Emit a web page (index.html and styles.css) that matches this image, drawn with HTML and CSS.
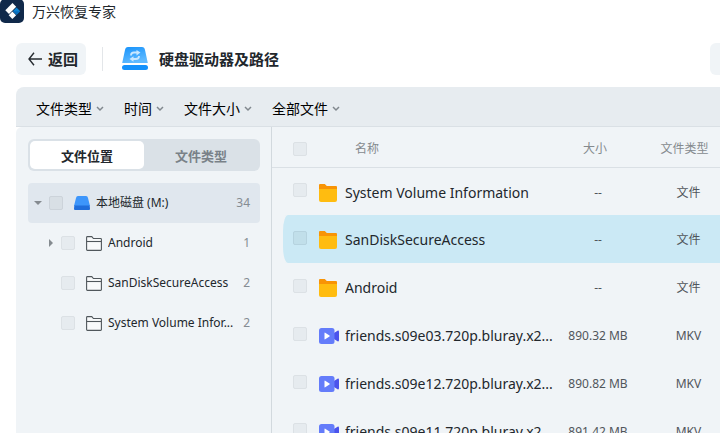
FILE: index.html
```html
<!DOCTYPE html>
<html lang="zh-CN">
<head>
<meta charset="utf-8">
<title>万兴恢复专家</title>
<link rel="stylesheet" href="styles.css">
</head>
<body>
<svg class="sprite" aria-hidden="true">
  <symbol id="chevron" viewBox="0 0 8 6"><path d="M1 1l3 3 3-3" fill="none" stroke="#81888e" stroke-width="1.5"/></symbol>
  <symbol id="folder-line" viewBox="0 0 16 15"><path d="M.6 13.500V1.400q0-.8.8-.8h4.400l1.600 1.900h7.200q.8 0 .8.8v10.200q0 .9-.8.9H1.400q-.8 0-.8-.9z" fill="#f8fafb" stroke="#50575c" stroke-width="1.1"/><path d="M.6 5.500h14.800" stroke="#50575c" stroke-width="1.1"/></symbol>
  <symbol id="folder" viewBox="0 0 18 18"><path d="M0 1q0-1 1-1h4.800l2 2H17q1 0 1 1v4H0z" fill="#f89406"/><path d="M0 5h18v11q0 2-2 2H2q-2 0-2-2z" fill="#ffbc10"/></symbol>
  <symbol id="video" viewBox="0 0 20 16"><path d="M15 5l3.500-2.300q1.500-.5 1.500 1v8.600q0 1.500-1.500 1L15 11z" fill="#4b53ec"/><rect width="15.500" height="16" rx="2.500" fill="#647cfa"/><path d="M5.500 5v6q0 .7.700.3l4.300-2.800q.5-.5 0-1L6.200 4.700q-.7-.4-.7.3z" fill="#fff"/></symbol>
</svg>
<div class="app">
  <header class="titlebar">
    <svg class="logo" viewBox="0 0 24 24" aria-hidden="true"><rect y="-1" width="24" height="24" rx="5" fill="#10294a"/><path d="M12.500 3l3.700 3.700-7.200 7.200L5.300 10.200z" fill="#fff"/><path d="M12.400 11.600l3.700 3.700-3.700 3.700-3.700-3.700z" fill="#fff"/><path d="M16.500 7.500l3.700 3.700-3.700 3.600-3.600-3.600z" fill="#0c86d6"/><path d="M12.900 11.200h7.300l-3.700 3.600z" fill="#0a6dbb"/></svg>
    <h1 class="app-name">万兴恢复专家</h1>
  </header>
  <nav class="navbar">
    <button class="back" type="button"><svg class="arrow" viewBox="0 0 14 14" aria-hidden="true"><path d="M6 .8L1 7l5 6.200M1 7h13" fill="none" stroke="#262b30" stroke-width="1.400"/></svg>返回</button>
    <span class="separator"></span>
    <svg class="drive" viewBox="0 0 26 24" aria-hidden="true"><defs><linearGradient id="blue" x2=".4" y2="1"><stop stop-color="#1692fb"/><stop offset="1" stop-color="#60baff"/></linearGradient></defs><path d="M3 3q.5-3 3-3h14q2.500 0 3 3l2.800 13H.2z" fill="url(#blue)"/><rect y="18" width="26" height="5" rx="2.500" fill="#1491fb"/><path d="M9 8.500q0-3 3-3h3M17 9q0 3-3 3h-3" fill="none" stroke="#c8e7ff" stroke-width="1.800"/><path d="M14.500 3L18.500 5.500l-4 3zM11.500 9.200L7.500 12l4 2.800z" fill="#c8e7ff"/></svg>
    <h2 class="page-title">硬盘驱动器及路径</h2>
    <button class="more" type="button" aria-label="更多"></button>
  </nav>
  <section class="filters">
    <button class="filter" type="button">文件类型<svg class="chevron" aria-hidden="true"><use href="#chevron"/></svg></button>
    <button class="filter" type="button">时间<svg class="chevron" aria-hidden="true"><use href="#chevron"/></svg></button>
    <button class="filter" type="button">文件大小<svg class="chevron" aria-hidden="true"><use href="#chevron"/></svg></button>
    <button class="filter" type="button">全部文件<svg class="chevron" aria-hidden="true"><use href="#chevron"/></svg></button>
  </section>
  <main class="content">
    <aside class="sidebar">
      <div class="tabs">
        <button class="tab active" type="button">文件位置</button>
        <button class="tab" type="button">文件类型</button>
      </div>
      <ul class="tree">
        <li class="node root">
          <span class="caret open"></span><input class="check" type="checkbox" id="disk">
          <svg class="disk" viewBox="0 0 16 14" aria-hidden="true"><path d="M2 2q.3-2 2-2h8q1.700 0 2 2l2 8H0z" fill="#3d96fb"/><path d="M.3 9.500h15.400L16 13q0 1-1 1H1q-1 0-1-1z" fill="#206edb"/></svg>
          <label class="node-name" for="disk">本地磁盘 (M:)</label><span class="count">34</span>
        </li>
        <li class="node">
          <span class="caret"></span><input class="check" type="checkbox" id="t1">
          <svg class="outline" aria-hidden="true"><use href="#folder-line"/></svg>
          <label class="node-name" for="t1">Android</label><span class="count">1</span>
        </li>
        <li class="node">
          <span class="caret none"></span><input class="check" type="checkbox" id="t2">
          <svg class="outline" aria-hidden="true"><use href="#folder-line"/></svg>
          <label class="node-name" for="t2">SanDiskSecureAccess</label><span class="count">2</span>
        </li>
        <li class="node">
          <span class="caret none"></span><input class="check" type="checkbox" id="t3">
          <svg class="outline" aria-hidden="true"><use href="#folder-line"/></svg>
          <label class="node-name" for="t3">System Volume Infor...</label><span class="count">2</span>
        </li>
      </ul>
    </aside>
    <section class="files">
      <table class="table">
        <thead>
          <tr><th class="pick"><input class="check" type="checkbox" aria-label="全选"></th><th class="name">名称</th><th class="size">大小</th><th class="type">文件类型</th></tr>
        </thead>
        <tbody>
          <tr><td class="pick"><input class="check" type="checkbox" id="f1"></td><td class="name"><div class="entry"><svg class="file-icon" aria-hidden="true"><use href="#folder"/></svg><label class="file-name" for="f1">System Volume Information</label></div></td><td class="size">--</td><td class="type">文件</td></tr>
          <tr class="selected"><td class="pick"><input class="check" type="checkbox" id="f2"></td><td class="name"><div class="entry"><svg class="file-icon" aria-hidden="true"><use href="#folder"/></svg><label class="file-name" for="f2">SanDiskSecureAccess</label></div></td><td class="size">--</td><td class="type">文件</td></tr>
          <tr><td class="pick"><input class="check" type="checkbox" id="f3"></td><td class="name"><div class="entry"><svg class="file-icon" aria-hidden="true"><use href="#folder"/></svg><label class="file-name" for="f3">Android</label></div></td><td class="size">--</td><td class="type">文件</td></tr>
          <tr><td class="pick"><input class="check" type="checkbox" id="f4"></td><td class="name"><div class="entry"><svg class="file-icon video" aria-hidden="true"><use href="#video"/></svg><label class="file-name" for="f4">friends.s09e03.720p.bluray.x2...</label></div></td><td class="size">890.32 MB</td><td class="type">MKV</td></tr>
          <tr><td class="pick"><input class="check" type="checkbox" id="f5"></td><td class="name"><div class="entry"><svg class="file-icon video" aria-hidden="true"><use href="#video"/></svg><label class="file-name" for="f5">friends.s09e12.720p.bluray.x2...</label></div></td><td class="size">890.82 MB</td><td class="type">MKV</td></tr>
          <tr><td class="pick"><input class="check" type="checkbox" id="f6"></td><td class="name"><div class="entry"><svg class="file-icon video" aria-hidden="true"><use href="#video"/></svg><label class="file-name" for="f6">friends.s09e11.720p.bluray.x2...</label></div></td><td class="size">891.42 MB</td><td class="type">MKV</td></tr>
        </tbody>
      </table>
    </section>
  </main>
</div>
</body>
</html>
```
FILE: styles.css
```css
* { box-sizing: border-box; }
body {
  margin: 0;
  background: #fff;
  color: #22272c;
  font: 12px/20px "Noto Sans", "Noto Sans CJK SC", sans-serif;
}
button {
  border: 0;
  padding: 0;
  background: none;
  color: inherit;
  font: inherit;
}
h1, h2, ul { margin: 0; padding: 0; }
svg { display: block; flex: none; }
.sprite { position: absolute; width: 0; height: 0; }
.app { display: flex; flex-direction: column; height: 100vh; overflow: hidden; }

.titlebar { display: flex; gap: 8px; height: 43px; flex: none; }
.logo { width: 24px; height: 24px; }
.app-name { font-size: 14px; line-height: 24px; font-weight: 400; }

.navbar { display: flex; align-items: center; height: 44px; padding: 0 0 12px 16px; flex: none; }
.back {
  display: flex;
  align-items: center;
  gap: 6px;
  height: 32px;
  padding: 0 8px 0 12px;
  border-radius: 6px;
  background: #f0f4f7;
  font-size: 15px;
  font-weight: 700;
}
.arrow { width: 14px; height: 14px; }
.separator { width: 1px; height: 24px; margin: 0 19px 0 16px; background: #e3e6e9; }
.drive { width: 26px; height: 24px; }
.page-title { margin-left: 11px; font-size: 15px; font-weight: 700; }
.more { width: 10px; height: 32px; margin-left: auto; border-radius: 6px 0 0 6px; background: #f0f4f7; }

.filters {
  display: flex;
  gap: 20px;
  height: 40px;
  margin-left: 16px;
  padding: 4px 20px 0;
  border-bottom: 1px solid #dae0e5;
  border-radius: 8px 0 0 0;
  background: #e7ecf0;
  flex: none;
}
.filter { display: flex; align-items: center; gap: 4px; font-size: 14px; color: #000; }
.chevron { width: 8px; height: 6px; }

.content { display: flex; flex: 1; min-height: 0; margin-left: 16px; border-radius: 6px 0 0 0; background: #f0f4f7; }
.sidebar { width: 256px; padding: 12px 11px 0 12px; border-right: 1px solid #d2d9de; flex: none; }
.tabs { display: flex; height: 32px; padding: 2px; border-radius: 6px; background: #dae1e7; }
.tab { flex: 1; padding-top: 2px; border-radius: 5px; color: #798188; font-size: 13px; font-weight: 700; }
.tab.active { background: #fff; color: #22272c; }
.tree { margin-top: 12px; list-style: none; }
.node { display: flex; align-items: center; height: 40px; padding: 0 10px 0 18px; border-radius: 4px; }
.node.root { padding-left: 6px; background: #e0e7ee; }
.caret { width: 8px; height: 8px; margin-right: 7px; background: #858b90; clip-path: polygon(3px 0, 7px 4px, 3px 8px); flex: none; }
.caret.open { clip-path: polygon(0 2px, 8px 2px, 4px 6px); }
.caret.none { visibility: hidden; }
.check {
  display: block;
  appearance: none;
  width: 14px;
  height: 14px;
  margin: 0;
  border: 1px solid #dce1e5;
  border-radius: 2px;
  background: #e6ebef;
  flex: none;
}
.root .check { border-color: #ccd3da; background: #d8dfe5; }
.selected .check { border-color: #b6d3df; background: #c1dfea; }
.disk { width: 16px; height: 14px; margin: 0 6px 0 11px; }
.outline { width: 16px; height: 15px; margin: 0 6px 0 11px; }
.node-name { flex: 1; min-width: 0; overflow: hidden; white-space: nowrap; text-overflow: ellipsis; }
.count { margin-left: 2px; color: #858c92; }

.files { flex: 1; min-width: 0; overflow: hidden; }
.table { width: 100%; table-layout: fixed; border-collapse: separate; border-spacing: 0; }
th, td { padding: 0; color: #50565b; font-weight: 400; text-align: center; }
th { height: 41px; padding-top: 3px; border-bottom: 1px solid #dae0e5; color: #858a8e; }
td { height: 48px; padding-top: 2px; }
tbody tr:first-child td { height: 47px; }
.pick { width: 47px; padding-left: 21px; }
td.pick { padding-top: 0; padding-bottom: 3px; }
.name { text-align: left; }
th.name { padding-left: 36px; }
.size { width: 90px; }
.type { width: 77px; padding-left: 14px; }
th.size { padding-right: 6px; }
th.type { padding-left: 6px; }
.entry { display: flex; align-items: center; }
.file-icon { width: 18px; height: 18px; margin-right: 8px; }
.file-icon.video { width: 20px; height: 16px; margin-right: 6px; }
.file-name { min-width: 0; overflow: hidden; white-space: nowrap; text-overflow: ellipsis; color: #22272c; font-size: 14px; }
.selected td { background: #cbe9f5; }
.selected .pick { border-left: 11px solid #f0f4f7; border-radius: 16px 0 0 16px; padding-left: 10px; }
```
